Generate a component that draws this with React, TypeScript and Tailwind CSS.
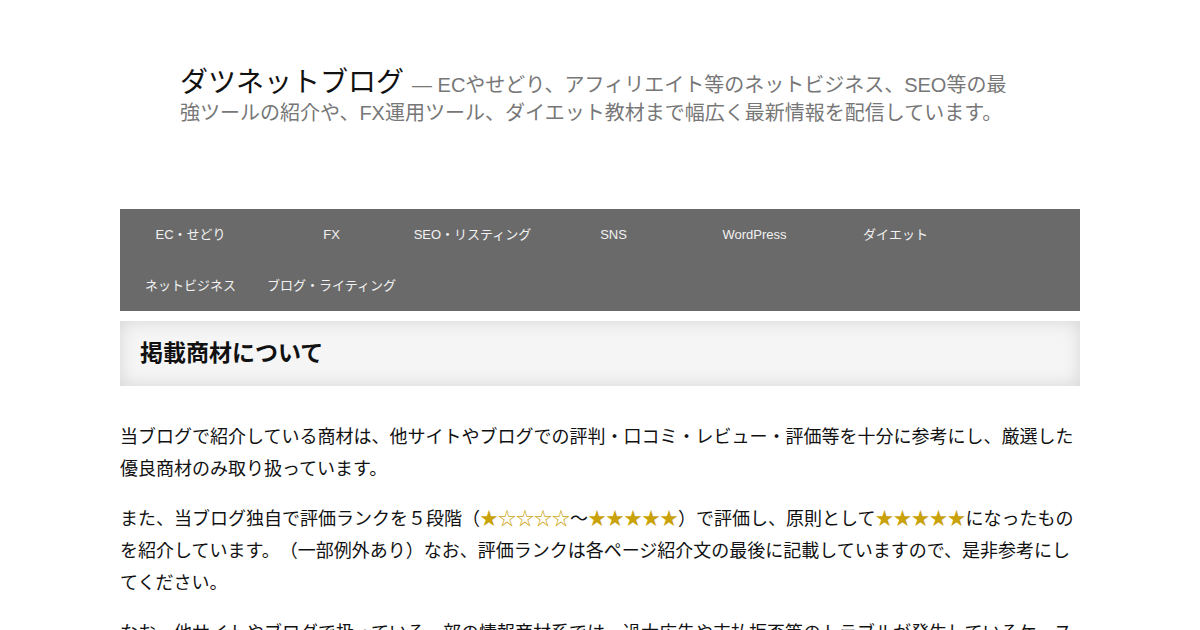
const NAV_ITEMS = [
  "EC・せどり",
  "FX",
  "SEO・リスティング",
  "SNS",
  "WordPress",
  "ダイエット",
  "ネットビジネス",
  "ブログ・ライティング",
];

const FONT = "font-['Liberation_Sans','Noto_Sans_CJK_JP',sans-serif]";

function Stars({ filled }: { filled: number }) {
  return (
    <span className="text-[#c9a20a]">
      {"★".repeat(filled)}
      {"☆".repeat(5 - filled)}
    </span>
  );
}

export default function App() {
  return (
    <div className={`min-h-screen bg-white ${FONT} [text-spacing-trim:space-all]`}>
      <div className="mx-auto w-[960px]">
        {/* Site header */}
        <header className="pl-[60px] pr-[66px] pt-[69px] pb-[82px]">
          <p className="text-[20px] leading-[28px] text-[#777]">
            <span className="text-[28px] text-[#111]">ダツネットブログ</span>
            <span className="ml-[8px]">— ECやせどり、アフィリエイト等のネットビジネス、SEO等の最強ツールの紹介や、FX運用ツール、ダイエット教材まで幅広く最新情報を配信しています。</span>
          </p>
        </header>

        {/* Category nav */}
        <nav className="flex flex-wrap bg-[#6a6a6a]">
          {NAV_ITEMS.map((item) => (
            <a
              key={item}
              className="flex h-[51px] w-[141px] items-center justify-center text-[13px] text-[#f2f2f2]"
            >
              {item}
            </a>
          ))}
        </nav>

        {/* Page title */}
        <div className="mt-[10px] flex h-[65px] items-center bg-[#f5f5f5] px-[20px] shadow-[inset_0_0_18px_rgba(0,0,0,0.13)]">
          <h1 className="text-[23px] font-bold text-[#111]">掲載商材について</h1>
        </div>

        {/* Body */}
        <div className="mt-[35px] text-[18px] leading-[32px] text-[#111]">
          <p className="mb-[18px]">
            当ブログで紹介している商材は、他サイトやブログでの評判・口コミ・レビュー・評価等を十分に参考にし、厳選した優良商材のみ取り扱っています。
          </p>
          <p className="mb-[18px]">
            また、当ブログ独自で評価ランクを５段階（<Stars filled={1} />～<Stars filled={5} />）で評価し、原則として<Stars filled={5} />になったものを紹介しています。（一部例外あり）なお、評価ランクは各ページ紹介文の最後に記載していますので、是非参考にしてください。
          </p>
          <p>
            なお、他サイトやブログで扱っている一部の情報商材系では、過大広告や支払拒否等のトラブルが発生しているケースもあるため、当ブログでは慎重に商材を選定しています。
          </p>
        </div>
      </div>
    </div>
  );
}
